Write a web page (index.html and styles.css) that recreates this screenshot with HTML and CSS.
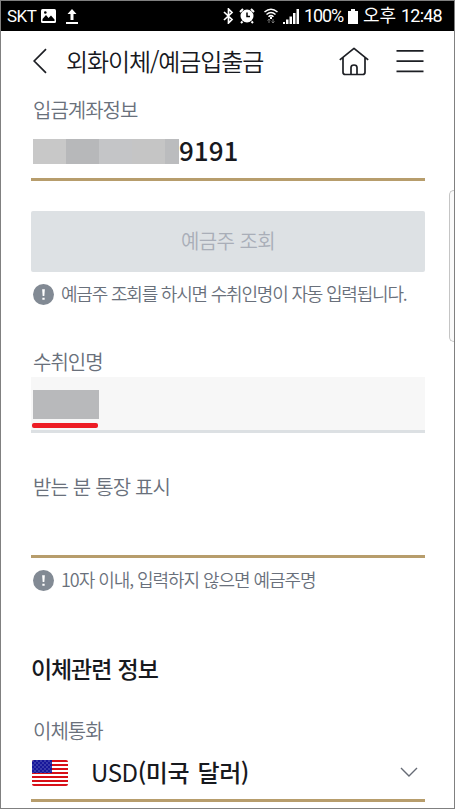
FILE: index.html
```html
<!DOCTYPE html>
<html lang="ko">
<head>
<meta charset="utf-8">
<title>외화이체/예금입출금</title>
<link rel="stylesheet" href="styles.css">
</head>
<body>
<div class="screen">
  <div class="status">
    <span class="carrier">SKT</span>
    <svg class="ic-pic" width="15" height="14" viewBox="0 0 15 14"><rect width="15" height="14" rx="1.500" fill="#fff"/><path d="M1.500 12V10L5 6l2.500 3L10 6.500l3.500 4V12z" fill="#000"/><circle cx="4.300" cy="3.500" r="1.300" fill="#000"/></svg>
    <svg class="ic-up" width="12" height="15" viewBox="0 0 12 15"><path d="M6 0l4.500 5H7.500v6h-3V5h-3zM0 13h12v2H0z" fill="#fff"/></svg>
    <div class="status-right">
      <svg class="ic-bt" width="11" height="16" viewBox="0 0 11 16" fill="none" stroke="#fff" stroke-width="1.700"><path d="M1 4l8 7.500L5.500 15V1L9 4.500 1 12"/></svg>
      <svg class="ic-alarm" width="16" height="16" viewBox="0 0 16 16"><path d="M1 4l3-3M15 4l-3-3M3.500 13.500l-1.500 1.500M12.500 13.500l1.500 1.500" stroke="#fff" stroke-width="2"/><circle cx="8" cy="8" r="6.500" fill="#fff"/><path d="M8 4.500V8.500h3" fill="none" stroke="#000" stroke-width="1.500"/></svg>
      <svg class="ic-wifi" width="14" height="16" viewBox="0 0 14 16" fill="none" stroke="#fff" stroke-width="1.500"><path d="M.5 4Q7-1.500 13.500 4M2.500 6.500Q7 2.500 11.500 6.500M4.500 8.800Q7 6.500 9.500 8.800"/><path d="M7 9v2" stroke-width="2"/><path d="M5 11v4M3.500 12.500L5 11l1.200 1.500M9 11v4M7.700 13.500L9 15l1.500-1.500" stroke="#777" stroke-width="1"/></svg>
      <svg class="ic-signal" width="16" height="15" viewBox="0 0 16 15" fill="#fff"><path d="M0 13h2v2H0zM3 10.500h2.500V15H3zM6.500 7.500H9V15H6.500zM10 4h2.500v11H10zM13.500 0H16v15h-2.500z"/></svg>
      <span class="percent">100%</span>
      <svg class="ic-batt" width="10" height="15" viewBox="0 0 10 15"><path d="M3 0h4v2h3v13H0V2h3z" fill="#fff"/></svg>
      <span class="ampm">오후</span>
      <span class="time">12:48</span>
    </div>
  </div>

  <header class="bar">
    <svg class="ic-back" width="14" height="26" viewBox="0 0 14 26" fill="none" stroke="#1d1f24" stroke-width="1.700"><path d="M13 1.200L1.200 13 13 24.800"/></svg>
    <h1>외화이체/예금입출금</h1>
    <svg class="ic-home" width="30" height="29" viewBox="0 0 30 29" fill="none" stroke="#1d1f24" stroke-width="1.700" stroke-linejoin="round"><path d="M.8 12.800L15 1.300l14.200 11.500M4 10.500v14.700q0 2.300 2.300 2.300h17.400q2.300 0 2.300-2.300V10.500M12 27.500v-7q0-2.500 3-2.500t3 2.500v7"/></svg>
    <svg class="ic-menu" width="28" height="24" viewBox="0 0 28 24" fill="#1d1f24"><path d="M.5 1h27v1.800H.5zM.5 11.200h27V13H.5zM.5 21.500h27v1.700H.5z"/></svg>
  </header>

  <main>
    <div class="label first">입금계좌정보</div>
    <div class="account gold">
      <span class="mask"><i class="m1"></i><i class="m2"></i><i class="m3"></i><i class="m4"></i><i class="m5"></i></span><span class="digits">9191</span>
    </div>
    <button class="lookup" disabled>예금주 조회</button>
    <div class="note">
      <svg width="21" height="21" viewBox="0 0 20 20"><circle cx="10" cy="10" r="10" fill="#828a94"/><path d="M8.700 5h2.600l-.5 6.500H9.200zM8.900 13h2.200v2H8.900z" fill="#fff"/></svg>
      <span class="note-a">예금주 조회를 하시면 수취인명이 자동 입력됩니다.</span>
    </div>

    <div class="label payee">수취인명</div>
    <div class="field">
      <div class="name-mask"></div>
      <div class="red"></div>
    </div>

    <div class="label memo">받는 분 통장 표시</div>
    <div class="memo-input gold"></div>
    <div class="note second">
      <svg width="21" height="21" viewBox="0 0 20 20"><circle cx="10" cy="10" r="10" fill="#828a94"/><path d="M8.700 5h2.600l-.5 6.500H9.200zM8.900 13h2.200v2H8.900z" fill="#fff"/></svg>
      <span class="note-b">10자 이내, 입력하지 않으면 예금주명</span>
    </div>

    <h2>이체관련 정보</h2>
    <div class="label currency-label">이체통화</div>
    <div class="currency gold">
      <svg class="flag" width="36" height="26" viewBox="0 0 36 26">
        <defs>
          <clipPath id="round"><rect width="36" height="26" rx="2"/></clipPath>
          <pattern id="stars" width="4" height="4" patternUnits="userSpaceOnUse"><path d="M.5.5h1v1h-1zM2.500 2.500h1v1h-1z" fill="#9da1dc"/></pattern>
        </defs>
        <g clip-path="url(#round)">
          <rect width="36" height="26" fill="#fff"/>
          <path d="M0 1h36M0 5h36M0 9h36M0 13h36M0 17h36M0 21h36M0 25h36" stroke="#d80f18" stroke-width="2"/>
          <rect width="20" height="13" fill="#17179a"/><rect width="20" height="13" fill="url(#stars)"/>
        </g>
      </svg>
      <span class="currency-name"><span class="code">USD</span>(미국 달러)</span>
      <svg class="ic-down" width="18" height="11" viewBox="0 0 18 11" fill="none" stroke="#666b75" stroke-width="1.400"><path d="M1 1l8 8 8-8"/></svg>
    </div>
  </main>
  <div class="scroll-handle"></div>
</div>
</body>
</html>
```
FILE: styles.css
```css
* { box-sizing: border-box; }
body { margin: 0; background: #fff; font-family: "Noto Sans CJK KR", sans-serif; }
.screen {
  position: relative; width: 455px; height: 809px; overflow: hidden;
  border: 1px solid #808080; background: #fff; white-space: nowrap;
}
svg { display: block; flex: none; }

.status {
  display: flex; align-items: center; height: 30px; padding: 0 11px 0 6px;
  background: #000; color: #fff; font: 17px/30px Roboto, "Noto Sans CJK KR", sans-serif;
}
.carrier { width: 34px; font-size: 17px; letter-spacing: -0.5px; }
.ic-up { margin-left: 10px; }
.status-right { display: flex; align-items: center; margin-left: auto; }
.ic-alarm { margin-left: 5px; }
.ic-wifi { margin-left: 9px; }
.ic-signal { margin-left: 5px; }
.percent { width: 39px; margin-left: 5px; font-size: 18px; letter-spacing: -1.1px; }
.ic-batt { margin-left: 5px; }
.ampm { width: 34px; margin-left: 5px; font-size: 18px; }
.time { width: 41px; margin-left: 4px; margin-right: 1px; font-size: 18px; letter-spacing: -0.8px; }

.bar { display: flex; align-items: center; height: 60px; padding: 0 30px 0 32px; }
h1 { margin: 0 0 0 19px; font-size: 24px; line-height: 36px; font-weight: 350; letter-spacing: -1.1px; color: #17191e; }
.ic-home { margin-left: auto; }
.ic-menu { margin-left: 27px; }

main { padding: 0 29px 0 30px; }
.label { height: 28px; padding-left: 2px; font-size: 20px; line-height: 28px; font-weight: 350; letter-spacing: -1px; color: #69707b; }
.first { margin-top: 5px; }
.gold { border-bottom: 3px solid #b79d6c; }
.account { display: flex; align-items: center; height: 57px; padding-left: 2px; }
.mask { display: flex; height: 25px; }
.mask i { width: 33px; background: #c4c5c7; }
.mask .m1 { background: #c8c8c8; }
.mask .m2 { background: #b7b8ba; }
.mask .m4 { background: #c5c5c5; }
.mask .m5 { width: 14px; background: #bbbcbe; }
.digits { margin: -3px 0 0; font-size: 26px; line-height: 40px; font-weight: 500; color: #17191e; }
.lookup {
  display: block; width: 100%; height: 61px; margin: 30px 0 0; padding: 0 0 2px; border: 0; border-radius: 2px;
  background: #dde1e4; color: #a9aeb8; font: 350 20px/58px "Noto Sans CJK KR", sans-serif; letter-spacing: -0.6px;
}
.note { display: flex; align-items: center; height: 27px; margin-top: 9px; padding-left: 2px; font-size: 18px; line-height: 25px; font-weight: 350; color: #69707b; }
.note span { margin-left: 7px; padding-bottom: 2px; letter-spacing: -1.2px; }
.note .note-b { letter-spacing: -1.05px; }
.payee { margin-top: 39px; line-height: 30px; }
.field { height: 56px; margin-top: 2px; padding: 13px 0 0 2px; background: #f7f7f7; border-bottom: 3px solid #dce0e3; }
.name-mask { width: 66px; height: 29px; background: #b8b9bb; }
.red { width: 66px; height: 5px; margin: 4px 0 0 -1px; border-radius: 2px; background: #ed1c24; }
.memo { margin-top: 40px; letter-spacing: -0.85px; }
.memo-input { height: 57px; }
h2 { margin: 57px 0 0; font-size: 23px; line-height: 34px; font-weight: 500; letter-spacing: -1.1px; word-spacing: 1px; color: #17191e; }
.currency-label { margin-top: 32px; }
.currency { display: flex; align-items: center; height: 57px; padding: 1px 7px 0 1px; }
.currency-name { margin: -1px 0 0 23px; font-size: 24px; line-height: 36px; font-weight: 500; letter-spacing: -0.4px; word-spacing: 2px; color: #17191e; }
.code { font-weight: 400; }
.ic-down { margin-left: auto; }
.scroll-handle {
  position: absolute; top: 189px; right: 0; width: 5px; height: 152px;
  border: 1px solid #c5c5c5; border-right: 0; border-radius: 5px 0 0 5px; background: #fafafa;
}
```
